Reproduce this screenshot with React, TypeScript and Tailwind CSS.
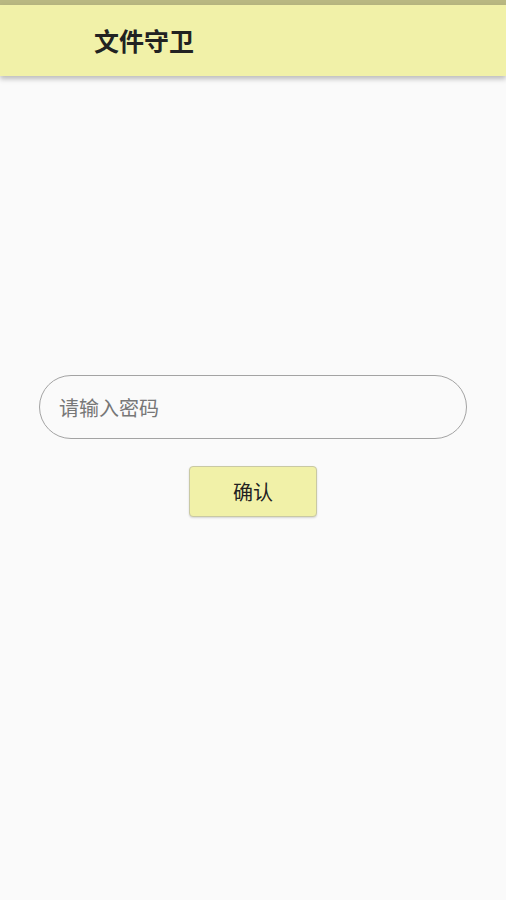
import React from 'react';

const FONT = { fontFamily: '"Noto Sans CJK SC", "Noto Sans", sans-serif' };

export default function App(): React.ReactElement {
    return (
        <div className="w-[506px] h-[900px] bg-[#fafafa] flex flex-col" style={FONT}>
            {/* status bar */}
            <div className="h-[5px] bg-[#b9b882]" />
            {/* app bar */}
            <div className="h-[71px] bg-[#f1f1a8] flex items-center pl-[94px] shadow-[0_3px_5px_rgba(0,0,0,0.25)] z-10">
                <span className="text-[25px] font-semibold text-[#222] leading-none">文件守卫</span>
            </div>
            <div className="flex flex-col items-center pt-[299px]">
                <input
                    type="password"
                    placeholder="请输入密码"
                    className="w-[428px] h-[64px] rounded-full border border-[#a3a3a3] bg-[#fafafa] pl-[19px] pr-[20px] text-[20px] text-[#333] placeholder:text-[#777] outline-none"
                />
                <button className="mt-[27px] w-[128px] h-[51px] rounded-[4px] bg-[#f1f1a8] border border-[#c9c9a4] text-[20px] text-[#222] shadow-[0_1px_2px_rgba(0,0,0,0.15)]">
                    确认
                </button>
            </div>
        </div>
    );
}
